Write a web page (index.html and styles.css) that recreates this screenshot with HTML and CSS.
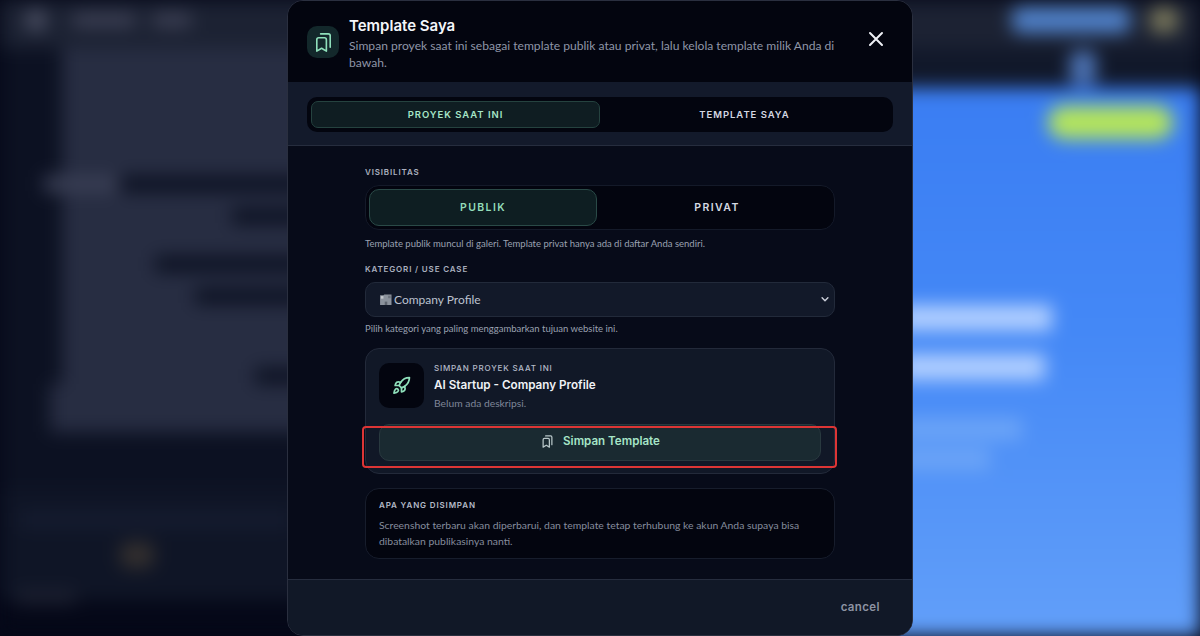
FILE: index.html
```html
<!DOCTYPE html>
<html lang="id">
<head>
<meta charset="utf-8">
<title>Template Saya</title>
<link rel="stylesheet" href="styles.css">
</head>
<body>
<div class="page">
  <div class="page-top">
    <div class="logo-dot"></div>
    <div class="logo-bar"></div>
    <div class="logo-bar short"></div>
    <div class="top-spacer"></div>
    <div class="top-cta"></div>
    <div class="top-avatar"></div>
  </div>
  <div class="page-main">
    <div class="page-left">
      <div class="lines">
        <div class="line a"></div><div class="line a"></div><div class="line a"></div><div class="line a"></div>
        <div class="line a"></div><div class="line a"></div><div class="line a"></div><div class="line a"></div>
        <div class="line h"></div>
        <div class="line a"></div>
        <div class="line b"></div>
        <div class="line a"></div><div class="line a"></div>
        <div class="line c"></div>
        <div class="line a"></div>
        <div class="line d"></div>
        <div class="line a"></div><div class="line a"></div><div class="line a"></div><div class="line a"></div>
        <div class="line e"></div>
        <div class="line f"></div><div class="line f"></div><div class="line f"></div>
      </div>
      <div class="left-panel">
        <div class="panel-row"></div>
        <div class="panel-blob"></div>
      </div>
      <div class="left-foot"><div class="foot-bar"></div></div>
    </div>
    <div class="page-right">
      <div class="right-head"><div class="head-dot"></div></div>
      <div class="preview">
        <div class="pill-row"><div class="pill"></div></div>
        <div class="hero-line"></div>
        <div class="hero-line second"></div>
        <div class="hero-sub"></div>
        <div class="hero-sub short"></div>
      </div>
    </div>
  </div>
</div>

<div class="overlay">
  <section class="modal">
    <header class="modal-head">
      <div class="head-icon">
        <svg class="icon-bm" viewBox="0 0 24 24" fill="none" stroke="currentColor" stroke-width="1.700" stroke-linecap="round" stroke-linejoin="round"><path d="M9 3h8a2 2 0 0 1 2 2v12"/><path d="M15 9v12l-5-3-5 3V9a2 2 0 0 1 2-2h6a2 2 0 0 1 2 2z"/></svg>
      </div>
      <div class="head-text">
        <h1>Template Saya</h1>
        <p>Simpan proyek saat ini sebagai template publik atau privat, lalu kelola template milik Anda di bawah.</p>
      </div>
      <button class="close" aria-label="Tutup">
        <svg viewBox="0 0 24 24" fill="none" stroke="currentColor" stroke-width="2" stroke-linecap="round"><path d="M6 6l12 12M18 6L6 18"/></svg>
      </button>
    </header>

    <div class="tab-strip">
      <div class="tabs">
        <div class="tab active">PROYEK SAAT INI</div>
        <div class="tab">TEMPLATE SAYA</div>
      </div>
    </div>

    <div class="modal-body">
      <div class="label">VISIBILITAS</div>
      <div class="segment">
        <div class="seg active">PUBLIK</div>
        <div class="seg">PRIVAT</div>
      </div>
      <p class="hint">Template publik muncul di galeri. Template privat hanya ada di daftar Anda sendiri.</p>

      <div class="label second">KATEGORI / USE CASE</div>
      <div class="select">
        <svg class="bld" viewBox="0 0 14 13"><path fill="#8b929c" d="M0 1.500h4l1-1h8.500v12.500H0z"/><path fill="#c3c7cc" d="M1 2.500h3v3H1z"/><path fill="#5d646e" d="M5.500 9h3v4h-3z"/><path fill="#6d747e" d="M9.500 2h3v3h-3z"/></svg>
        <span class="select-text">Company Profile</span>
        <svg class="chev" viewBox="0 0 12 12" fill="none" stroke="currentColor" stroke-width="1.700" stroke-linecap="round" stroke-linejoin="round"><path d="M2.500 4.500 6 8l3.500-3.500"/></svg>
      </div>
      <p class="hint tight">Pilih kategori yang paling menggambarkan tujuan website ini.</p>

      <div class="card">
        <div class="card-top">
          <div class="rocket-box">
            <svg viewBox="0 0 24 24" fill="none" stroke="currentColor" stroke-width="2.200" stroke-linecap="round" stroke-linejoin="round"><path d="M4.500 16.500c-1.500 1.260-2 5-2 5s3.740-.5 5-2c.71-.84.700-2.130-.09-2.910a2.180 2.180 0 0 0-2.910-.09z"/><path d="m12 15-3-3a22 22 0 0 1 2-3.950A12.880 12.880 0 0 1 22 2c0 2.720-.78 7.500-6 11a22.350 22.350 0 0 1-4 2z"/><path d="M9 12H4s.55-3.030 2-4c1.620-1.080 5 0 5 0"/><path d="M12 15v5s3.030-.55 4-2c1.080-1.620 0-5 0-5"/></svg>
          </div>
          <div class="card-text">
            <div class="card-eyebrow">SIMPAN PROYEK SAAT INI</div>
            <div class="card-title">AI Startup - Company Profile</div>
            <div class="card-desc">Belum ada deskripsi.</div>
          </div>
        </div>
        <button class="save">
          <svg class="icon-save" viewBox="0 0 24 24" fill="none" stroke="currentColor" stroke-width="2" stroke-linecap="round" stroke-linejoin="round"><path d="M9 3h8a2 2 0 0 1 2 2v12"/><path d="M15 9v12l-5-3-5 3V9a2 2 0 0 1 2-2h6a2 2 0 0 1 2 2z"/></svg>
          <span>Simpan Template</span>
        </button>
        <div class="highlight"></div>
      </div>

      <div class="info">
        <div class="info-title">APA YANG DISIMPAN</div>
        <p>Screenshot terbaru akan diperbarui, dan template tetap terhubung ke akun Anda supaya bisa dibatalkan publikasinya nanti.</p>
      </div>
    </div>

    <footer class="modal-foot">
      <button class="cancel">cancel</button>
    </footer>
  </section>
</div>
</body>
</html>
```

FILE: styles.css
```css
* { box-sizing: border-box; }
html, body { margin: 0; height: 100%; }
body {
  width: 1200px;
  height: 636px;
  overflow: hidden;
  background: #050818;
  font-family: "Lato", "Liberation Sans", sans-serif;
  position: relative;
}

/* blurred page behind the dialog */
.page {
  width: 1200px;
  height: 636px;
  display: flex;
  flex-direction: column;
  filter: blur(9px);
  background: #0a0f20;
}
.page-top {
  height: 48px;
  flex: none;
  display: flex;
  align-items: center;
  gap: 12px;
  padding: 0 22px 8px 25px;
  background: #1c2233;
}
.logo-dot { width: 22px; height: 22px; border-radius: 50%; background: #4a4e62; }
.logo-bar { width: 62px; height: 12px; background: #42455a; margin-left: 14px; }
.logo-bar.short { width: 38px; margin-left: 6px; }
.top-spacer { flex: 1; }
.top-cta { width: 118px; height: 26px; border-radius: 8px; background: #4f80c8; }
.top-avatar { width: 28px; height: 26px; border-radius: 8px; background: #77755a; margin-left: 8px; }

.page-main { flex: 1; display: flex; min-height: 0; }
.page-left { width: 600px; flex: none; background: #0c1122; display: flex; flex-direction: column; }
.lines { padding: 0 0 0 62px; height: 402px; flex: none; background: #0c1122; }
.line { height: 16px; background: #272d42; }
.line.a { width: 540px; }
.line.h { width: 75px; margin-left: -18px; background: #3a3f55; }
.line.b { width: 170px; }
.line.c { width: 93px; }
.line.d { width: 133px; }
.line.e { width: 193px; }
.line.f { width: 540px; margin-left: -12px; }
.left-panel {
  height: 112px;
  flex: none;
  margin-top: 38px;
  background: #0f1526;
  padding: 24px 20px 0;
}
.panel-row { height: 16px; width: 270px; background: #151c30; }
.panel-blob { width: 34px; height: 26px; background: #332f2e; margin: 14px 0 0 100px; border-radius: 8px; }
.left-foot { flex: 1; background: #050818; padding: 0 0 0 16px; }
.foot-bar { width: 60px; height: 14px; background: #1c2030; margin-top: -10px; }

.page-right { flex: 1; display: flex; flex-direction: column; min-width: 0; }
.right-head {
  height: 40px;
  flex: none;
  background: #11182a;
  display: flex;
  padding-left: 470px;
  align-items: center;
}
.head-dot { width: 26px; height: 34px; border-radius: 8px; background: #4d74b6; }
.preview {
  flex: 1;
  background: linear-gradient(180deg, #3a7df2 0%, #4488f6 45%, #629ff9 100%);
  padding: 18px 27px 0 300px;
}
.pill-row { display: flex; justify-content: flex-end; }
.pill { width: 125px; height: 33px; border-radius: 17px; background: #b4e55c; }
.hero-line { width: 152px; height: 26px; margin-top: 166px; background: #b1cfff; }
.hero-line.second { width: 145px; margin-top: 23px; }
.hero-sub { width: 122px; height: 22px; margin-top: 38px; background: #6ba4f7; }
.hero-sub.short { width: 90px; margin-top: 8px; }

/* dialog */
.overlay {
  position: absolute;
  inset: 0;
  display: flex;
  justify-content: center;
}
.modal {
  width: 626px;
  height: 636px;
  display: flex;
  flex-direction: column;
  border: 1px solid #2a2f3f;
  border-radius: 16px;
  overflow: hidden;
  background: #070b19;
  color: #fff;
}
.modal-head {
  height: 81px;
  flex: none;
  display: flex;
  align-items: flex-start;
  padding: 15px 19px 0 19px;
  background: #03050f;
}
.head-icon {
  width: 32px;
  height: 32px;
  margin-top: 10px;
  border-radius: 10px;
  background: #13282b;
  color: #8fe0bb;
  display: flex;
  align-items: center;
  justify-content: center;
  flex: none;
}
.icon-bm { width: 23px; height: 23px; }
.head-text { width: 490px; margin-left: 10px; flex: none; }
.head-text h1 {
  margin: 0;
  font-family: "Inter", sans-serif;
  font-size: 15px;
  line-height: 20px;
  font-weight: 600;
  color: #f4f6fa;
}
.head-text p {
  margin: 1px 0 0;
  font-size: 12.100px;
  line-height: 17px;
  color: #8f96a8;
}
.close {
  width: 24px;
  height: 24px;
  padding: 0;
  margin: 11px 0 0 25px;
  border: 0;
  background: none;
  color: #eef0f5;
  flex: none;
}
.close svg { width: 24px; height: 24px; display: block; }

.tab-strip {
  height: 64px;
  flex: none;
  padding: 15px 19px 0;
  background: #131a2b;
  border-bottom: 1px solid #262d3e;
}
.tabs {
  height: 35px;
  display: flex;
  padding: 4px;
  border-radius: 10px;
  background: #03050f;
}
.tab {
  width: 289px;
  flex: none;
  display: flex;
  align-items: center;
  justify-content: center;
  border-radius: 7px;
  font-family: "Inter", sans-serif;
  font-size: 9.500px;
  font-weight: 600;
  letter-spacing: 0.950px;
  color: #d4d8e2;
  border: 1px solid transparent;
}
.tab.active {
  background: #0f1d22;
  border-color: #25423f;
  color: #a6e5c7;
}

.modal-body {
  flex: 1;
  min-height: 0;
  padding: 20px 77px 0;
  background: #070b19;
}
.label {
  font-family: "Inter", sans-serif;
  font-size: 8px;
  line-height: 12px;
  font-weight: 600;
  letter-spacing: 0.850px;
  color: #aab0bf;
}
.label.second { margin-top: 13px; }
.segment {
  height: 45px;
  margin-top: 7px;
  display: flex;
  padding: 3px;
  border-radius: 14px;
  background: #03050f;
  border: 1px solid #141a29;
}
.seg {
  width: 228px;
  flex: none;
  margin-right: 6px;
  display: flex;
  align-items: center;
  justify-content: center;
  border-radius: 10px;
  border: 1px solid transparent;
  font-family: "Inter", sans-serif;
  font-size: 10.500px;
  font-weight: 600;
  letter-spacing: 1.400px;
  color: #d6dae3;
}
.seg.active { background: #0e1e22; border-color: #2a4a47; color: #93dcb9; }
.hint {
  margin: 7px 0 0;
  font-size: 9.500px;
  line-height: 13px;
  color: #9aa1b1;
}
.hint.tight { margin-top: 5px; }
.select {
  height: 35px;
  margin-top: 7px;
  display: flex;
  align-items: center;
  padding: 0 4px 1px 14px;
  border-radius: 10px;
  background: #121929;
  border: 1px solid #222a3a;
  color: #bcc2cf;
}
.bld { width: 12px; height: 11px; flex: none; }
.select-text { margin-left: 2px; font-size: 12px; }
.chev { width: 10px; height: 10px; margin-left: auto; color: #ccd0da; }

.card {
  position: relative;
  height: 126px;
  margin-top: 13px;
  padding: 14px 13px 0;
  border-radius: 14px;
  background: #111827;
  border: 1px solid #232a3a;
}
.card-top { display: flex; height: 47px; }
.rocket-box {
  width: 45px;
  height: 45px;
  flex: none;
  border-radius: 10px;
  background: #03050f;
  color: #8fe0bb;
  display: flex;
  align-items: center;
  justify-content: center;
}
.rocket-box svg { width: 19px; height: 19px; }
.card-text { margin-left: 10px; }
.card-eyebrow {
  font-family: "Inter", sans-serif;
  font-size: 8px;
  line-height: 11px;
  font-weight: 500;
  letter-spacing: 0.800px;
  color: #b4bac8;
}
.card-title {
  font-family: "Inter", sans-serif;
  margin-top: 3px;
  font-size: 11.700px;
  line-height: 17px;
  font-weight: 600;
  color: #f0f2f6;
}
.card-desc {
  margin-top: 2px;
  font-size: 10.300px;
  line-height: 14px;
  color: #7f8698;
}
.save {
  width: 442px;
  height: 37px;
  margin-top: 14px;
  padding: 0 0 3px;
  display: flex;
  align-items: center;
  justify-content: center;
  gap: 8px;
  border-radius: 10px;
  border: 1px solid #29393f;
  background: #1a2a31;
  color: #a6e5c7;
  font-family: "Inter", sans-serif;
  font-size: 11.600px;
  font-weight: 600;
}
.icon-save { width: 15px; height: 15px; color: #b7c6c8; }
.highlight {
  position: absolute;
  left: -4px;
  right: -3px;
  top: 77px;
  height: 42px;
  border: 2.500px solid #dd3535;
  border-radius: 4px;
}

.info {
  height: 71px;
  margin-top: 14px;
  padding: 11px 13px 0;
  border-radius: 14px;
  background: #03050f;
  border: 1px solid #171d2c;
}
.info-title {
  font-family: "Inter", sans-serif;
  font-size: 8px;
  line-height: 11px;
  font-weight: 600;
  letter-spacing: 0.850px;
  color: #b4bac8;
}
.info p {
  margin: 6px 0 0;
  font-size: 10.400px;
  line-height: 16px;
  color: #858c9d;
}

.modal-foot {
  height: 56px;
  flex: none;
  display: flex;
  justify-content: flex-end;
  align-items: flex-start;
  padding: 19px 32px 0 0;
  background: #111827;
  border-top: 1px solid #262d3e;
}
.cancel {
  padding: 0;
  border: 0;
  background: none;
  font-family: "Inter", sans-serif;
  font-size: 11.500px;
  font-weight: 600;
  letter-spacing: 0.400px;
  line-height: 16px;
  color: #8d93a3;
}
```
